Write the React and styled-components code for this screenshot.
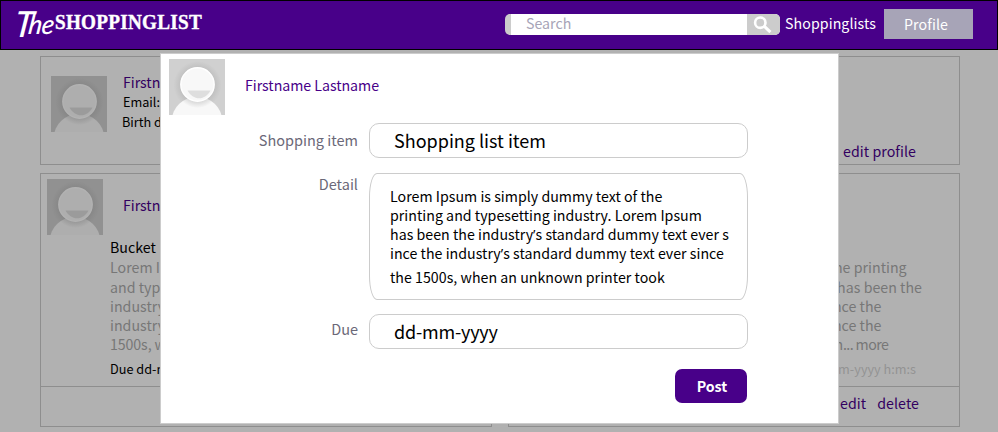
import React from 'react';
import styled, { createGlobalStyle } from 'styled-components';

const GlobalStyle = createGlobalStyle`
  * { box-sizing: border-box; }
  body {
    margin: 0;
    background: #b1b1b1;
    font-family: 'Noto Sans CJK SC', 'Open Sans', sans-serif;
    font-size: 14.2px;
    line-height: 20px;
    color: #000;
  }
  button, input { font: inherit; }
`;

const Screen = styled.div`
  position: relative;
  width: 998px;
  height: 432px;
  overflow: hidden;
`;

const Header = styled.header`
  display: flex;
  align-items: flex-start;
  height: 50px;
  padding: 8px 24px 0 16px;
  border: 1px solid #000;
  background: #480089;
  color: #fff;
`;

const Logo = styled.div`
  display: flex;
  align-items: flex-start;
  width: 488px;
  white-space: nowrap;
`;

const LogoScript = styled.span`
  display: flex;
  flex: none;
  width: 38px;
  margin-top: -5px;
  font: italic 500 27px/40px Lato, sans-serif;
  letter-spacing: -0.5px;
  transform: scaleX(0.96) skewX(-8deg);
  transform-origin: left center;
`;

const LogoInitial = styled.span`
  margin: 0 -5px 0 -2px;
  font-size: 36px;
  line-height: 39px;
`;

const LogoName = styled.span`
  margin-top: 2px;
  font: 900 20.6px/23px 'Liberation Serif', serif;
  letter-spacing: 0.3px;
  -webkit-text-stroke: 0.4px #fff;
  transform: scaleX(0.93);
  transform-origin: left center;
`;

const Search = styled.div`
  display: flex;
  flex: none;
  width: 275px;
  height: 21px;
  margin-top: 5px;
  border-left: 6px solid #ccc;
  border-radius: 5px;
  overflow: hidden;
  background: #fff;
`;

const SearchText = styled.span`
  flex: 1;
  padding-left: 15px;
  color: #a7a4b7;
  line-height: 18px;
`;

const SearchButton = styled.span`
  display: flex;
  width: 33px;
  background: #ccc;
`;

const NavLink = styled.a`
  flex: none;
  width: 104px;
  padding: 4px 0 0 5px;
  letter-spacing: 0.08px;
`;

const ProfileTab = styled.a`
  flex: none;
  width: 89px;
  height: 30px;
  padding: 5px 0 0 20px;
  background: #a7a4b7;
  letter-spacing: 0.1px;
`;

const Page = styled.main`
  display: grid;
  grid-template-columns: 452px 452px;
  grid-template-rows: 109px 254px;
  gap: 8px 16px;
  padding: 6px 38px 0 40px;
`;

const Card = styled.section`
  border: 1px solid #8e8e8e;
  white-space: nowrap;
`;

const ProfileCard = styled(Card)`
  grid-column: 1 / -1;
  display: flex;
  padding: 15px 43px 0 10px;
`;

const AvatarBox = styled.svg`
  display: block;
  flex: none;
  width: 56px;
  height: 56px;
  margin-top: ${p => p.$top || 0}px;
`;

const Name = styled.div`
  color: ${p => (p.$bright ? '#480089' : '#320060')};
  letter-spacing: -0.04px;
`;

const Info = styled.div`
  flex: 1;
  padding: 0 0 0 16px;
`;

const InfoLine = styled.div`
  margin-left: ${p => p.$shift || 0}px;
  font-size: 12.7px;
`;

const Action = styled.a`
  color: #320060;
  letter-spacing: 0.06px;
`;

const ProfileAction = styled(Action)`
  align-self: flex-end;
  margin-bottom: 3px;
`;

const ItemHead = styled.div`
  display: flex;
  gap: 20px;
  height: 63px;
  padding: 5px 0 0 6px;
`;

const HeadName = styled(Name)`
  margin-top: 16px;
`;

const ItemBody = styled.div`
  height: 149px;
  padding-left: 69px;
`;

const Paragraph = styled.div`
  color: #777;
  letter-spacing: 0.025px;
`;

const Line = styled.div`
  height: ${p => p.$h || 19}px;
`;

const ClosingLine = styled(Line)`
  letter-spacing: -0.1px;
`;

const More = styled.span`
  letter-spacing: -0.6px;
`;

const Dates = styled.div`
  display: flex;
  justify-content: space-between;
  width: 338px;
  padding-top: 6px;
  font-size: 12.7px;
`;

const Stamp = styled.span`
  color: #939393;
`;

const ItemFooter = styled.footer`
  display: flex;
  justify-content: flex-end;
  gap: 11px;
  height: 40px;
  padding: 6px 40px 0 0;
  border-top: 1px solid #8e8e8e;
`;

const Quote = styled.span`
  font-family: 'Open Sans', sans-serif;
  line-height: 1;
`;

const Modal = styled.div`
  position: absolute;
  left: 160px;
  top: 53px;
  width: 679px;
  height: 371px;
  border: 1px solid #ccc;
  background: #fff;
  white-space: nowrap;
`;

const ModalHead = styled.div`
  display: flex;
  gap: 20px;
  height: 69px;
  padding: 5px 0 0 8px;
`;

const Field = styled.label`
  display: flex;
  align-items: flex-start;
  margin-bottom: ${p => p.$gap}px;
`;

const FieldLabel = styled.span`
  width: 208px;
  padding: ${p => p.$top}px 11px 0 0;
  color: #6b6878;
  font-size: 14.5px;
  text-align: right;
`;

const TextInput = styled.div`
  width: 379px;
  height: 35px;
  padding: 5px 24px 0;
  border: 1px solid #ccc;
  border-radius: 10px;
  font-size: 18px;
  line-height: 22px;
  letter-spacing: ${p => p.$track || 0}px;
`;

const TextArea = styled.div`
  width: 379px;
  height: 127px;
  padding: 12px 0 0 20px;
  border: 1px solid #ccc;
  border-radius: 8px / 24px;
  letter-spacing: 0.02px;
`;

const PostButton = styled.button`
  display: block;
  width: 72px;
  height: 34px;
  margin-left: 514px;
  padding: 0 0 0 2px;
  border: 0;
  border-radius: 7px;
  background: #480089;
  color: #fff;
  font-weight: 700;
  line-height: 32px;
`;

function Avatar({ id, dim, top }) {
  const back = dim ? '#919191' : '#d0d0d0';
  const shade = dim ? '#858585' : '#bcbcbc';
  const skin = dim ? '#aeaeae' : '#f8f8f8';
  const rim = dim ? '#b2b2b2' : '#fff';
  const mouth = dim ? '#9b9b9b' : '#dedede';
  return (
    <AvatarBox viewBox="0 0 56 56" $top={top}>
      <defs>
        <radialGradient id={`halo-${id}`}>
          <stop offset="0.72" stopColor={shade} />
          <stop offset="1" stopColor={shade} stopOpacity="0" />
        </radialGradient>
        <clipPath id={`body-${id}`}>
          <ellipse cx="28" cy="61" rx="25" ry="23" />
        </clipPath>
      </defs>
      <rect width="56" height="56" fill={back} />
      <circle cx="28.5" cy="26" r="24" fill={`url(#halo-${id})`} opacity="0.75" />
      <ellipse cx="28" cy="61" rx="25" ry="23" fill={skin} />
      <g clipPath={`url(#body-${id})`}>
        <circle cx="28.5" cy="27" r="22" fill={`url(#halo-${id})`} opacity="0.5" />
      </g>
      <circle cx="28.5" cy="25.5" r="16.7" fill={skin} stroke={rim} strokeWidth="1.4" />
      <path d="M18.5 31.5h23c-2.5 4.8-6.8 7.8-11.4 7.8s-9-3-11.6-7.8z" fill={mouth} />
    </AvatarBox>
  );
}

function SearchIcon() {
  return (
    <svg width="33" height="21" viewBox="0 0 33 21" fill="none" stroke="#fff">
      <circle cx="13.3" cy="8.7" r="5.2" strokeWidth="2.6" />
      <path d="M17.4 12.4l6 5.8" strokeWidth="3" />
    </svg>
  );
}

function Item({ id, avatar }) {
  return (
    <Card>
      <ItemHead>
        {avatar && <Avatar id={id} dim />}
        {avatar && <HeadName>Firstname Lastname</HeadName>}
      </ItemHead>
      <ItemBody>
        {avatar ? <Line $h={20}>Bucket</Line> : <Line $h={20} />}
        <Paragraph>
          <Line $h={20}>Lorem Ipsum is simply dummy text of the printing</Line>
          <Line>and typesetting industry. Lorem Ipsum has been the</Line>
          <Line>industry<Quote>’</Quote>s standard dummy text ever since the</Line>
          <Line>industry<Quote>’</Quote>s standard dummy text ever since the</Line>
          <ClosingLine>1500s, when an unknown printer took an<More>... more</More></ClosingLine>
        </Paragraph>
        <Dates>
          <span>Due dd-mm-yyyy</span>
          <Stamp>dd-mm-yyyy h:m:s</Stamp>
        </Dates>
      </ItemBody>
      <ItemFooter>
        {!avatar && <Action>edit</Action>}
        {!avatar && <Action>delete</Action>}
      </ItemFooter>
    </Card>
  );
}

export default function App() {
  return (
    <Screen>
      <GlobalStyle />
      <Header>
        <Logo>
          <LogoScript><LogoInitial>T</LogoInitial>he</LogoScript>
          <LogoName>SHOPPINGLIST</LogoName>
        </Logo>
        <Search>
          <SearchText>Search</SearchText>
          <SearchButton><SearchIcon /></SearchButton>
        </Search>
        <NavLink>Shoppinglists</NavLink>
        <ProfileTab>Profile</ProfileTab>
      </Header>
      <Page>
        <ProfileCard>
          <Avatar id="me" dim top={4} />
          <Info>
            <Name>Firstname Lastname</Name>
            <InfoLine>Email:</InfoLine>
            <InfoLine $shift={-1}>Birth date:</InfoLine>
          </Info>
          <ProfileAction>edit profile</ProfileAction>
        </ProfileCard>
        <Item id="left" avatar />
        <Item id="right" />
      </Page>
      <Modal>
        <ModalHead>
          <Avatar id="modal" />
          <HeadName $bright>Firstname Lastname</HeadName>
        </ModalHead>
        <Field $gap={15}>
          <FieldLabel $top={7}>Shopping item</FieldLabel>
          <TextInput>Shopping list item</TextInput>
        </Field>
        <Field $gap={14}>
          <FieldLabel $top={1}>Detail</FieldLabel>
          <TextArea>
            <Line>Lorem Ipsum is simply dummy text of the</Line>
            <Line>printing and typesetting industry. Lorem Ipsum</Line>
            <Line>has been the industry<Quote>’</Quote>s standard dummy text ever s</Line>
            <Line $h={24}>ince the industry<Quote>’</Quote>s standard dummy text ever since</Line>
            <Line>the 1500s, when an unknown printer took</Line>
          </TextArea>
        </Field>
        <Field $gap={20}>
          <FieldLabel $top={5}>Due</FieldLabel>
          <TextInput $track={-0.2}>dd-mm-yyyy</TextInput>
        </Field>
        <PostButton>Post</PostButton>
      </Modal>
    </Screen>
  );
}
